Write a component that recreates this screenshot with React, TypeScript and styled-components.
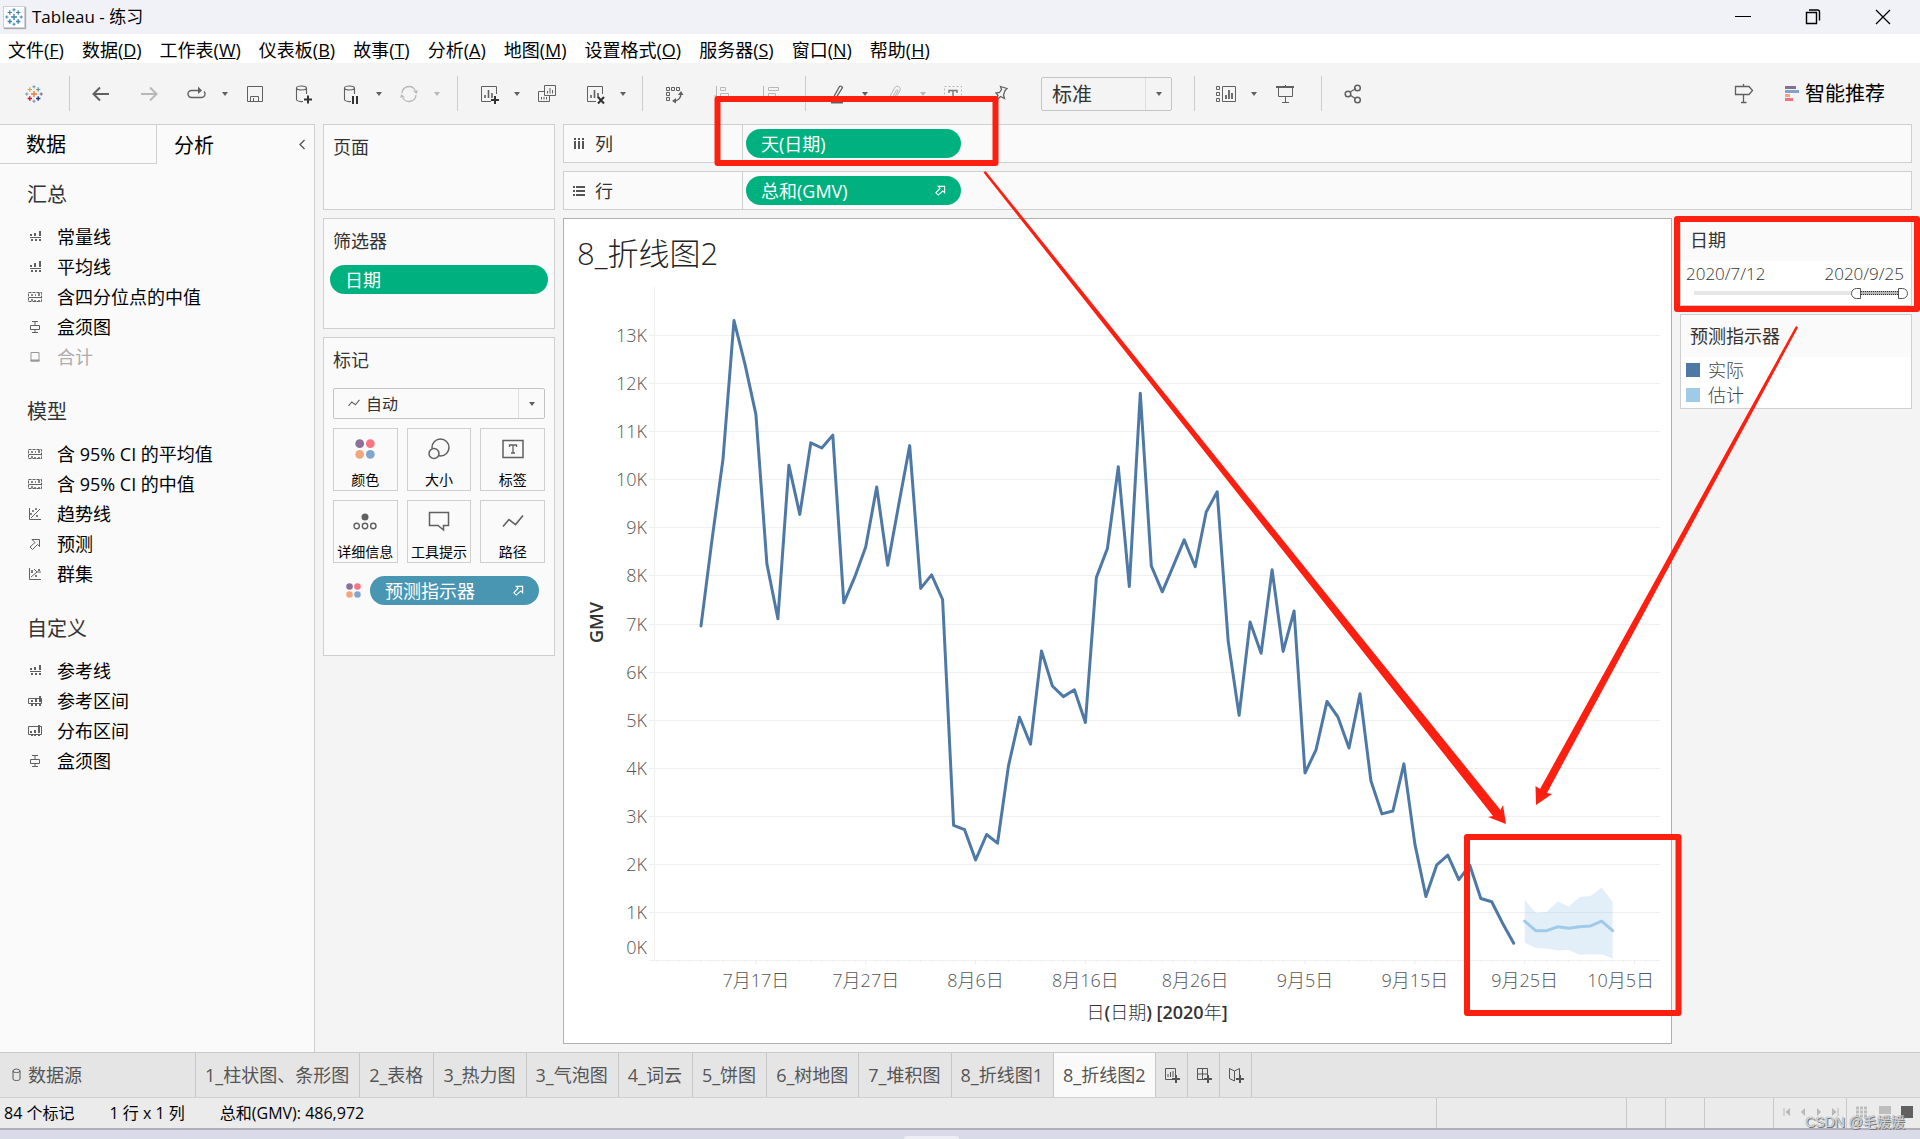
import React, { useLayoutEffect, useRef, useState } from 'react';
import styled, { createGlobalStyle } from 'styled-components';

const uiFont = `"Open Sans", "Noto Sans CJK SC", sans-serif`;

const GlobalStyle = createGlobalStyle`
  *, *::before, *::after { box-sizing: border-box; }
  body { margin: 0; background: #f4f4f4; font-family: ${uiFont}; font-size: 18px; color: #000; }
  button, select, input { font: inherit; color: inherit; margin: 0; }
  button { border: 0; background: none; padding: 0; cursor: pointer; }
  svg { display: block; flex: none; }
  h1, h2, p, ul { margin: 0; padding: 0; font-weight: 400; }
  ul { list-style: none; }
`;

const Window = styled.div`
  position: relative;
  display: flex;
  flex-direction: column;
  min-height: 100vh;
  overflow: hidden;
  line-height: 24px;
`;

/* ---------- title bar and menu ---------- */
const TitleBar = styled.header`
  display: flex;
  align-items: center;
  height: 34px;
  padding: 0 2px 0 3px;
  background: #f1f2f8;
  font-size: 17px;
`;
const AppIcon = styled.span`
  display: flex;
  align-items: center;
  justify-content: center;
  width: 22px;
  height: 22px;
  margin-right: 7px;
  background: #fff;
  border: 1px solid #d0d0d4;
  box-shadow: 1px 1px 1px #aaa;
`;
const WindowButtons = styled.div`
  display: flex;
  margin-left: auto;
`;
const WindowButton = styled.button`
  display: flex;
  align-items: center;
  justify-content: center;
  width: 70px;
  height: 34px;
`;
const MenuBar = styled.nav`
  display: flex;
  gap: 18px;
  height: 29px;
  padding: 4px 8px 0;
  background: #fff;
  line-height: 24px;
`;
const MenuItem = styled.button`
  white-space: nowrap;
  height: 24px;
`;

/* ---------- toolbar ---------- */
const Toolbar = styled.div`
  display: flex;
  align-items: center;
  height: 61px;
  padding-left: 16px;
  background: #f4f4f4;
`;
const ToolGroup = styled.div<{ $width?: number }>`
  display: flex;
  align-items: center;
  width: ${p => (p.$width ? `${p.$width}px` : 'auto')};
  height: 35px;
  padding-left: 15px;
  border-left: 1px solid #cdcdcd;
`;
const Tool = styled.button<{ $off?: boolean }>`
  display: flex;
  align-items: center;
  justify-content: center;
  flex: none;
  width: 32px;
  height: 32px;
  margin-right: 16px;
  color: ${p => (p.$off ? '#b8b8b8' : '#606060')};
`;
const LogoTool = styled(Tool)`
  width: 36px;
  margin-right: 17px;
`;
const Split = styled.div`
  display: flex;
  flex: none;
  gap: 6px;
  margin-right: 8px;
  & > button { margin-right: 0; }
`;
const CaretButton = styled.button<{ $off?: boolean }>`
  display: flex;
  align-items: center;
  justify-content: center;
  width: 12px;
  height: 32px;
  color: ${p => (p.$off ? '#b8b8b8' : '#606060')};
`;
const SelectBox = styled.label<{ $wide?: boolean }>`
  position: relative;
  display: flex;
  align-items: center;
  width: ${p => (p.$wide ? 'auto' : '131px')};
  height: ${p => (p.$wide ? '31px' : '34px')};
  margin: ${p => (p.$wide ? '6px 9px 0' : '0 0 0 8px')};
  border: 1px solid #c4c4c4;
  border-radius: 2px;
  background: ${p => (p.$wide ? '#fafafa' : '#f4f4f4')};
  color: #606060;
`;
const Select = styled.select<{ $wide?: boolean }>`
  appearance: none;
  flex: 1;
  align-self: stretch;
  padding: ${p => (p.$wide ? '0 0 0 32px' : '2px 0 0 10px')};
  border: 0;
  background: transparent;
  font-size: ${p => (p.$wide ? '16px' : '20px')};
  color: #333;
`;
const SelectCaret = styled.span`
  display: flex;
  align-items: center;
  justify-content: center;
  align-self: stretch;
  width: 26px;
  border-left: 1px solid #dedede;
  pointer-events: none;
`;
const SelectGlyph = styled.span`
  position: absolute;
  left: 14px;
  top: 10px;
`;
const ToolbarRight = styled.div`
  display: flex;
  align-items: center;
  margin-left: auto;
  padding-right: 35px;
`;
const ShowMe = styled.button`
  display: flex;
  align-items: center;
  gap: 6px;
  margin-left: 8px;
  font-size: 20px;
  white-space: nowrap;
`;

/* ---------- workspace ---------- */
const Workspace = styled.main`
  display: flex;
  flex: 1;
  background: #f4f4f4;
`;
const SidePane = styled.aside`
  flex: none;
  width: 315px;
  background: #fafafa;
  border-top: 1px solid #cfcfcf;
  border-right: 1px solid #cfcfcf;
`;
const PaneTabs = styled.div`
  display: flex;
  align-items: stretch;
  height: 39px;
  font-size: 20px;
`;
const PaneTab = styled.button<{ $active?: boolean }>`
  width: ${p => (p.$active ? 'auto' : '157px')};
  padding: 2px 0 0 ${p => (p.$active ? '17px' : '26px')};
  text-align: left;
  border: solid #cfcfcf;
  border-width: ${p => (p.$active ? '0' : '0 1px 1px 0')};
`;
const Collapse = styled.button`
  display: flex;
  align-items: center;
  justify-content: flex-end;
  flex: 1;
  padding-right: 8px;
`;
const PaneSections = styled.div`
  display: flex;
  flex-direction: column;
  gap: 12px;
  padding-top: 3px;
`;
const SectionTitle = styled.h2`
  padding-left: 27px;
  font-size: 20px;
  line-height: 55px;
  color: #333;
`;
const SectionItem = styled.button<{ $off?: boolean }>`
  display: flex;
  align-items: center;
  gap: 14px;
  height: 30px;
  padding-left: 27px;
  color: ${p => (p.$off ? '#adadad' : '#000')};
`;

const CardColumn = styled.div`
  display: flex;
  flex-direction: column;
  flex: none;
  gap: 8px;
  width: 232px;
  margin-left: 8px;
`;
const Card = styled.section<{ $min?: number }>`
  min-height: ${p => p.$min || 0}px;
  background: #fafafa;
  border: 1px solid #cfcfcf;
`;
const CardTitle = styled.h2`
  padding-left: 9px;
  font-size: 18px;
  line-height: 44px;
  color: #333;
`;
const Pill = styled.button<{ $color?: string }>`
  display: flex;
  align-items: center;
  justify-content: space-between;
  height: 29px;
  padding: 0 15px;
  border-radius: 15px;
  background: ${p => p.$color || '#00b180'};
  color: #fff;
  text-align: left;
  flex: 1;
  min-width: 0;
  max-width: 218px;
`;
const ShelfPill = styled(Pill)`
  max-width: 215px;
`;
const PillRow = styled.div`
  display: flex;
  align-items: center;
  gap: 9px;
  padding: 2px 6px;
`;
const MarksGrid = styled.div`
  display: grid;
  grid-template-columns: repeat(3, 1fr);
  gap: 9px;
  padding: 9px 9px 11px;
`;
const MarkButton = styled.button`
  display: flex;
  flex-direction: column;
  align-items: center;
  justify-content: space-between;
  height: 63px;
  padding: 7px 0 0;
  border: 1px solid #cfcfcf;
  font-size: 14px;
  line-height: 20px;
  white-space: nowrap;
`;
const MarkGlyph = styled.span`
  display: flex;
  height: 26px;
  align-items: center;
`;
const EncodingRow = styled(PillRow)`
  padding: 2px 15px 2px 22px;
`;

const Canvas = styled.div`
  display: flex;
  flex: 1;
  flex-direction: column;
  gap: 8px;
  min-width: 0;
  margin: 0 8px;
`;
const Shelf = styled.section`
  display: flex;
  height: 39px;
  background: #fafafa;
  border: 1px solid #cfcfcf;
`;
const ShelfLabel = styled.h2`
  display: flex;
  align-items: center;
  gap: 10px;
  width: 179px;
  padding-left: 9px;
  font-size: 18px;
  color: #333;
  border-right: 1px solid #cfcfcf;
`;
const ShelfPills = styled.div`
  display: flex;
  align-items: center;
  flex: 1;
  padding-left: 3px;
`;
const ViewRow = styled.div`
  display: flex;
  flex: 1;
  gap: 8px;
  min-height: 600px;
  margin-bottom: 8px;
`;
const ChartCard = styled.section`
  display: flex;
  flex: 1;
  flex-direction: column;
  min-width: 0;
  background: #fff;
  border: 1px solid #b0b0b0;
`;
const ChartTitle = styled.h1`
  padding-left: 13px;
  font-size: 31px;
  font-weight: 300;
  line-height: 68px;
  color: #222;
`;
const PlotArea = styled.div`
  flex: 1 1 0;
  min-height: 0;
  overflow: hidden;
`;
const AxisText = styled.text`
  font-size: 18px;
  font-weight: 300;
  fill: #555;
  dominant-baseline: central;
`;
const AxisTitle = styled.text`
  font-size: 18px;
  font-weight: 600;
  fill: #333;
  text-anchor: middle;
  dominant-baseline: central;
`;
const Light = styled.tspan`
  font-weight: 300;
`;

const LegendColumn = styled.div`
  display: flex;
  flex-direction: column;
  flex: none;
  gap: 8px;
  width: 232px;
`;
const SideCard = styled(Card)`
  background: #fff;
`;
const SideTitle = styled(CardTitle)`
  background: #fafafa;
  line-height: 42px;
`;
const DateRow = styled.div`
  display: flex;
  justify-content: space-between;
  padding: 0 7px 0 5px;
  font-size: 17px;
  font-weight: 300;
  line-height: 25px;
  color: #333;
`;
const RangeBox = styled.div`
  position: relative;
  height: 18px;
  margin: 0 3px 0 13px;
`;
const RangeTrack = styled.div`
  position: absolute;
  inset: 5px 4px 9px 0;
  background: #e6e6e6;
`;
const RangeFill = styled.div`
  position: absolute;
  inset: 0 4px 0 75%;
  border: dotted #333;
  border-width: 1px 0;
  background: #b5b5b5;
`;
const RangeInput = styled.input<{ $end?: boolean }>`
  position: absolute;
  left: 0;
  top: 0;
  width: 100%;
  height: 14px;
  appearance: none;
  background: transparent;
  pointer-events: none;
  &::-webkit-slider-thumb {
    appearance: none;
    width: 10px;
    height: 11px;
    border: 1px solid #555;
    border-radius: ${p => (p.$end ? '0 6px 6px 0' : '6px 0 0 6px')};
    background: #fff;
    pointer-events: auto;
  }
`;
const LegendList = styled.ul`
  padding: 0 5px;
  font-weight: 300;
  color: #444;
`;
const LegendItem = styled.li`
  display: flex;
  align-items: center;
  gap: 8px;
  height: 25px;
`;
const Swatch = styled.span<{ $color: string }>`
  width: 14px;
  height: 14px;
  background: ${p => p.$color};
`;

/* ---------- bottom bars ---------- */
const SheetBar = styled.nav`
  display: flex;
  height: 45px;
  background: #e5e5e5;
  border-top: 1px solid #cacaca;
  color: #555;
`;
const SheetTab = styled.button<{ $active?: boolean; $source?: boolean }>`
  display: flex;
  align-items: center;
  gap: 7px;
  width: ${p => (p.$source ? '196px' : 'auto')};
  padding: 0 10px 0 ${p => (p.$source ? '12px' : '9px')};
  border-right: 1px solid #c6c6c6;
  background: ${p => (p.$active ? '#fafafa' : 'transparent')};
  white-space: nowrap;
`;
const NewTab = styled.button`
  display: flex;
  align-items: center;
  justify-content: center;
  width: 32px;
  border-right: 1px solid #c6c6c6;
`;
const StatusBar = styled.footer`
  display: flex;
  align-items: center;
  gap: 35px;
  height: 33px;
  padding-left: 4px;
  background: #ebebeb;
  border-top: 1px solid #d0d0d0;
  border-bottom: 2px solid #afb0ba;
  font-size: 16px;
  white-space: nowrap;
`;
const StatusCells = styled.div`
  display: flex;
  align-self: stretch;
  margin-left: auto;
`;
const StatusCell = styled.div<{ $width: number }>`
  display: flex;
  align-items: center;
  justify-content: space-between;
  width: ${p => p.$width}px;
  padding: 0 7px 2px 9px;
  border-left: 1px solid #c9c9c9;
`;
const DesktopStrip = styled.div`
  display: flex;
  justify-content: center;
  align-items: flex-end;
  height: 9px;
  padding-right: 58px;
  background: #d9dbe9;
`;
const DesktopTab = styled.span`
  width: 55px;
  height: 3px;
  border-radius: 3px 3px 0 0;
  background: #eeeff6;
`;
const Watermark = styled.p`
  position: absolute;
  right: 15px;
  bottom: 7px;
  font-family: "Liberation Sans", "Noto Sans CJK SC", sans-serif;
  font-size: 14px;
  line-height: 20px;
  color: #d4d4d4;
  text-shadow: 1px 1px 0 #777, 0 0 1px #888;
`;
const Markup = styled.svg`
  position: absolute;
  left: 0;
  top: 0;
  width: 100%;
  height: 100%;
  pointer-events: none;
`;

/* ---------- icons ---------- */
type IconProps = { w?: number; h?: number; children: React.ReactNode };
const Icon = ({ w = 22, h = 22, children }: IconProps) => (
  <svg width={w} height={h} viewBox={`0 0 ${w} ${h}`} fill="none" stroke="currentColor" strokeWidth="1" aria-hidden="true">
    {children}
  </svg>
);
const Plus = ({ x, y, s = 3, c, t = 1 }: { x: number; y: number; s?: number; c: string; t?: number }) => (
  <path d={`M${x - s} ${y}H${x + s}M${x} ${y - s}V${y + s}`} stroke={c} strokeWidth={t} />
);
const Logo = ({ size, mono }: { size: number; mono?: boolean }) => {
  const c = (v: string) => (mono ? '#3a87b7' : v);
  return (
    <svg width={size} height={size} viewBox="0 0 18 18" aria-hidden="true">
      <Plus x={9} y={9} s={3} t={1.4} c={c('#eb7a33')} />
      <Plus x={4.8} y={4.5} s={2.2} t={1.2} c={c('#e8a23a')} />
      <Plus x={13.2} y={4.5} s={2.2} t={1.2} c={c('#5a9a9a')} />
      <Plus x={4.8} y={13.5} s={2.2} t={1.4} c={c('#c72035')} />
      <Plus x={13.2} y={13.5} s={2.2} t={1.4} c={c('#1f457e')} />
      <Plus x={9} y={1.8} s={1.6} c={c('#7199a6')} />
      <Plus x={9} y={16.2} s={1.6} c={c('#7b8fb0')} />
      <Plus x={1.8} y={9} s={1.6} c={c('#7199a6')} />
      <Plus x={16.2} y={9} s={1.6} c={c('#5b6591')} />
    </svg>
  );
};
const CaretGlyph = () => (
  <svg width="8" height="4" viewBox="0 0 8 4" aria-hidden="true"><path d="M1 0H7L4 4Z" fill="currentColor" /></svg>
);
const Back = () => <Icon><path d="M19 11H3.5M10 4.5L3.5 11L10 17.5" strokeWidth="2" /></Icon>;
const Forward = () => <Icon><path d="M3 11H18.5M12 4.5L18.5 11L12 17.5" strokeWidth="2" /></Icon>;
const Redo = () => <Icon><path d="M14 7.5H5.5A3.5 3.5 0 0 0 5.5 14.5H16A3.5 3.5 0 0 0 18 8.5" strokeWidth="1.4" /><path d="M12 3.5L16 7.5L12 11Z" fill="currentColor" stroke="none" /></Icon>;
const Save = () => <Icon><path d="M3.5 3.5H18.5V18.5H3.5ZM6.5 18.5V13.5H14.5V18.5M9.5 15V18.5" /></Icon>;
const Cylinder = () => <path d="M4.500 5V17C5.500 18.300 8 18.800 11 18.500M14.500 5V11M4.500 5C4.500 2.400 14.500 2.400 14.500 5C14.500 7.600 4.500 7.600 4.500 5Z" strokeWidth="1.1" />;
const AddData = () => <Icon><Cylinder /><path d="M12 16.5H20M16 12.5V20.5" stroke="#333" strokeWidth="2" /></Icon>;
const PauseData = () => <Icon><Cylinder /><path d="M13 13V21M17 13V21" stroke="#333" strokeWidth="2" /></Icon>;
const Refresh = () => <Icon><path d="M4 10A7 7 0 0 1 17 7M18 12A7 7 0 0 1 5 15" strokeWidth="1.3" /><path d="M15 7.5H20L18.5 11ZM7 14.5H2L3.5 11Z" fill="currentColor" stroke="none" /></Icon>;
const Bars = () => <path d="M7 15V12M10.5 15V7M14 15V10" strokeWidth="1.6" />;
const NewSheet = () => <Icon><path d="M13 18.5H3.5V3.5H18.5V11" /><Bars /><path d="M13 17H21M17 13V21" stroke="#333" strokeWidth="2" /></Icon>;
const Duplicate = () => <Icon><path d="M8.5 2.5H19.5V12.5H8.5ZM8 8.5H2.5V18.5H13.5V13" /><path d="M11.5 10.5V8M14 10.5V5M16.5 10.5V7M5.5 16.5V14M8 16.5V14M10.5 16.5V14" /></Icon>;
const ClearSheet = () => <Icon><path d="M12 18.5H3.5V3.5H18.5V11" /><Bars /><path d="M14 14L20 20.5M20 14L14 20.5" stroke="#333" strokeWidth="2" /></Icon>;
const Swap = () => <Icon><path d="M3.5 4.5H6.5V7.5H3.5ZM8.5 4.5H11.5V7.5H8.5ZM13.5 4.5H16.5V7.5H13.5ZM3.5 9.5H6.5V12.5H3.5ZM3.5 14.5H6.5V17.5H3.5Z" /><path d="M18 10C18 15 15 18 11 18" strokeWidth="1.4" /><path d="M15 12L18 8L20.5 12ZM13 15L9 18L13 20.5Z" fill="currentColor" stroke="none" /></Icon>;
const SortUp = () => <Icon><path d="M5.5 3V19M3 13H5M9.5 4.5H14.5V7.5H9.5ZM9.5 10.5H17.5V13.5H9.5Z" /></Icon>;
const SortDown = () => <Icon><path d="M4.5 3V19M9.5 4.5H19.5V7.5H9.5ZM9.5 10.5H16.5V13.5H9.5Z" /></Icon>;
const Pen = () => <Icon><path d="M13.5 3.5L8.5 12.5L8 16L10.5 14L16.5 4.5Q15 2.5 13.5 3.5Z" strokeWidth="1.3" /><path d="M5 19.5H17" strokeWidth="2" /></Icon>;
const Clip = () => <Icon><path d="M5 15L10.5 5A3 3 0 0 1 16 7.5L11 16M7.500 16L12.500 7A1 1 0 0 1 14 8L10 15" /></Icon>;
const TextLabel = () => <Icon><path d="M2.5 3.5H19.5V18.5H2.5Z" strokeDasharray="2 2" /><path d="M7 10V7.5H15V10M11 7.5V16M9 16H13" stroke="#777" strokeWidth="1.4" /></Icon>;
const Pin = () => <Icon><path d="M10.5 3.5L17 5.5L15 7.5L13.5 12L14.5 15.5L10.5 13.5L4.5 19L8 12.5L6 10L9.5 9.5L11.5 6.5Z" strokeWidth="1.3" /></Icon>;
const Guide = () => <Icon><path d="M1.5 3.5H4.5V6.5H1.5ZM1.5 9.5H4.5V12.5H1.5ZM1.5 15.5H4.5V18.5H1.5ZM7.5 3.5H20.5V18.5H7.5Z" /><path d="M11 16V12M14 16V7M17 16V10" strokeWidth="1.8" /></Icon>;
const Present = () => <Icon><path d="M3 4H21" strokeWidth="2" /><path d="M5.5 5V13.5H19.5V5M12.5 2V4M12.5 14V19M9 19.5H16" /></Icon>;
const Share = () => <Icon><path d="M8 9L14 5.5M8 12L14 16" strokeWidth="1.3" /><circle cx="6" cy="11" r="2.8" strokeWidth="1.5" /><circle cx="15.5" cy="5" r="2.8" strokeWidth="1.5" /><circle cx="15.5" cy="17" r="2.8" strokeWidth="1.5" /></Icon>;
const Sign = () => <Icon><path d="M10.5 1V3M10.5 12V19M8 19.5H13.5M2.5 3.5H16L19.5 7.500L16 11.500H2.500Z" strokeWidth="1.3" /></Icon>;
const ShowMeGlyph = () => (
  <svg width="15" height="18" viewBox="0 0 15 18" aria-hidden="true">
    <path d="M1 1H12V4H1Z" fill="#857095" /><path d="M1 5H15V8H1Z" fill="#7fa3cc" /><path d="M1 9H6V12H1Z" fill="#f0a57c" /><path d="M1 13H9V16H1Z" fill="#f76e80" />
  </svg>
);
const Arrow = ({ size = 12 }: { size?: number }) => (
  <svg width={size} height={size} viewBox="0 0 12 12" fill="none" stroke="currentColor" strokeWidth="1.2" aria-hidden="true">
    <path d="M3.5 1.5H10.5V8.5L8.5 6.5L3.5 11L1 8.5L5.5 3.5Z" />
  </svg>
);
const Dots = ({ size = 20 }: { size?: number }) => (
  <svg width={size} height={size} viewBox="0 0 20 20" aria-hidden="true">
    <circle cx="4.7" cy="4.7" r="4.4" fill="#8a7299" /><circle cx="15.3" cy="4.7" r="4.4" fill="#f77482" />
    <circle cx="4.7" cy="15.3" r="4.4" fill="#f2a67d" /><circle cx="15.3" cy="15.3" r="4.4" fill="#80a6cf" />
  </svg>
);
const ZigZag = ({ w = 22, t = 1.6 }: { w?: number; t?: number }) => (
  <svg width={w} height={w * 0.64} viewBox="0 0 22 14" fill="none" stroke="#606060" strokeWidth={t} aria-hidden="true">
    <path d="M1 12.5L7 5.5L13.5 10.5L21 1.5" />
  </svg>
);

const sideGlyphs: Record<string, React.ReactNode> = {
  line: <><path d="M3 8.5H14" /><path d="M4 5V7M8 4V7M13 2V7M5 10V12M9 10V12M13 10V12" strokeWidth="2" /></>,
  avg: <><path d="M3 9.5H14" /><path d="M4 6V8M8 4V8M13 2V8M5 11V13M9 11V13M13 11V13" strokeWidth="2" /></>,
  quart: <><path d="M1.5 3.5H14.5V12.5H1.5Z" strokeDasharray="3 1" /><path d="M2 8.5H14" /><path d="M4 6H6M8 6H9M12 4V7M4 11H6M8 11V13M12 11V13" strokeWidth="1.5" /></>,
  box: <path d="M3.5 6.5H12.5V10.5H3.5ZM8 6V3M8 11V13M5 2.5H11M5 13.5H11" />,
  total: <><path d="M4 3.5H12V12H4Z" /><path d="M3.5 11.5H12.5" strokeWidth="2" /></>,
  trend: <><path d="M2.5 2V13.5H14M4 12L13 3" /><path d="M6 4V6M4 7V9M10 9V11M9 2V4" strokeWidth="1.5" /></>,
  forecast: <path d="M5 3.5H12.5V10.5L10.5 8.5L5.5 13.5L3 11L8 6.5Z" />,
  cluster: <><path d="M2.5 2V13.5H14M4 11L10 6M7 3L10 6H14" /><path d="M5 4V7M12 3V5M9 9V11" strokeWidth="1.7" /></>,
  band: <><path d="M1.5 5.5H14.5V10.5H1.5Z" /><path d="M5 7V9M9 5V9M13 3V9M5 11V13M9 11V13M13 11V13" strokeWidth="2" /></>,
  dist: <><path d="M1.5 3.5H14.5V11.5H1.5Z" /><path d="M4 8V10M8 7V10M12 2V10M5 12V13M8 12V13M12 12V13" strokeWidth="2" /></>,
};

/* ---------- data ---------- */
const menus: [string, string][] = [['文件', 'F'], ['数据', 'D'], ['工作表', 'W'], ['仪表板', 'B'], ['故事', 'T'], ['分析', 'A'], ['地图', 'M'], ['设置格式', 'O'], ['服务器', 'S'], ['窗口', 'N'], ['帮助', 'H']];
const sections: { title: string; items: [string, string][] }[] = [
  { title: '汇总', items: [['line', '常量线'], ['avg', '平均线'], ['quart', '含四分位点的中值'], ['box', '盒须图'], ['total', '合计']] },
  { title: '模型', items: [['quart', '含 95% CI 的平均值'], ['quart', '含 95% CI 的中值'], ['trend', '趋势线'], ['forecast', '预测'], ['cluster', '群集']] },
  { title: '自定义', items: [['line', '参考线'], ['band', '参考区间'], ['dist', '分布区间'], ['box', '盒须图']] },
];
const sheets = ['1_柱状图、条形图', '2_表格', '3_热力图', '3_气泡图', '4_词云', '5_饼图', '6_树地图', '7_堆积图', '8_折线图1', '8_折线图2'];
const actual = [6.95, 8.74, 10.42, 13.3, 12.4, 11.35, 8.24, 7.1, 10.29, 9.27, 10.76, 10.65, 10.92, 7.43, 7.97, 8.59, 9.84, 8.21, 9.47, 10.7, 7.73, 8.01, 7.5, 2.8, 2.71, 2.08, 2.61, 2.43, 4.04, 5.05, 4.49, 6.43, 5.7, 5.48, 5.62, 4.94, 7.96, 8.56, 10.26, 7.77, 11.79, 8.2, 7.66, 8.2, 8.74, 8.18, 9.32, 9.74, 6.63, 5.09, 7.03, 6.38, 8.12, 6.42, 7.26, 3.89, 4.37, 5.38, 5.05, 4.41, 5.54, 3.73, 3.04, 3.1, 4.08, 2.41, 1.32, 1.98, 2.18, 1.67, 1.97, 1.28, 1.21, 0.76, 0.35];
const estimate = [0.81, 0.61, 0.61, 0.69, 0.66, 0.69, 0.71, 0.81, 0.61];
const upper = [1.25, 0.98, 1.0, 1.22, 1.11, 1.31, 1.33, 1.51, 1.21];
const lower = [0.36, 0.25, 0.24, 0.2, 0.21, 0.11, 0.12, 0.12, 0.03];
const dateTicks = ['7月17日', '7月27日', '8月6日', '8月16日', '8月26日', '9月5日', '9月15日', '9月25日', '10月5日'];

const LineChart = () => {
  const ref = useRef<HTMLDivElement>(null);
  const [size, setSize] = useState({ w: 1107, h: 756 });
  useLayoutEffect(() => {
    const el = ref.current;
    if (!el) return;
    const measure = () => setSize({ w: el.clientWidth, h: el.clientHeight });
    measure();
    const observer = new ResizeObserver(measure);
    observer.observe(el);
    return () => observer.disconnect();
  }, []);
  const left = 90;
  const right = size.w - 11;
  const bottom = size.h - 83;
  const x = (day: number) => left + ((day + 4.28) / 91.6) * (right - left);
  const y = (v: number) => bottom - (v / 14) * bottom;
  const pts = (values: number[], start: number) => values.map((v, i) => `${x(start + i).toFixed(1)},${y(v).toFixed(1)}`);
  const band = [...pts(upper, 75), ...pts(lower, 75).reverse()].join(' ');
  return (
    <PlotArea ref={ref}>
      <svg width={size.w} height={size.h} role="img" aria-label="GMV">
        {Array.from({ length: 14 }, (_, k) => (
          <g key={k}>
            <path d={`M${left - 5} ${Math.round(y(k)) + 0.5}H${right}`} stroke="#f0f0f0" />
            <AxisText x={left - 7} y={k === 0 ? y(0) - 13 : y(k)} textAnchor="end">{`${k}K`}</AxisText>
          </g>
        ))}
        <path d={`M${left + 0.5} 0V${bottom}`} stroke="#f0f0f0" />
        {Array.from({ length: 91 }, (_, i) => (
          <path key={i} d={`M${x(i - 4)} ${bottom}v${(i + 1) % 10 === 0 ? 4 : 2}`} stroke="#ececec" />
        ))}
        {dateTicks.map((label, i) => (
          <AxisText key={label} x={i === 8 ? right - 6 : x(5 + i * 10)} y={bottom + 20} textAnchor={i === 8 ? 'end' : 'middle'}>{label}</AxisText>
        ))}
        <polygon points={band} fill="#a0cbe8" fillOpacity="0.3" />
        <polyline points={pts(estimate, 75).join(' ')} fill="none" stroke="#a0cbe8" strokeWidth="3" strokeLinecap="round" strokeLinejoin="round" />
        <polyline points={pts(actual, 0).join(' ')} fill="none" stroke="#4e79a7" strokeWidth="3" strokeLinecap="round" strokeLinejoin="round" />
        <AxisTitle transform={`translate(32 ${bottom / 2 - 1}) rotate(-90)`}>GMV</AxisTitle>
        <AxisTitle x={(left + right) / 2} y={bottom + 52}>
          <Light>日</Light>(<Light>日期</Light>) [2020<Light>年</Light>]
        </AxisTitle>
      </svg>
    </PlotArea>
  );
};

const SplitTool = ({ name, off, children }: { name: string; off?: boolean; children: React.ReactNode }) => (
  <Split>
    <Tool aria-label={name} $off={off}>{children}</Tool>
    <CaretButton aria-label={`${name} 选项`} $off={off}><CaretGlyph /></CaretButton>
  </Split>
);

export default function App() {
  return (
    <Window>
      <GlobalStyle />
      <TitleBar>
        <AppIcon><Logo size={18} mono /></AppIcon>
        Tableau - 练习
        <WindowButtons>
          <WindowButton aria-label="最小化"><Icon w={16} h={16}><path d="M0 7.5H16" stroke="#000" /></Icon></WindowButton>
          <WindowButton aria-label="还原"><Icon w={16} h={16}><path d="M1.5 3.5H11.5V14.5H1.5ZM4 1H12.5Q14.5 1 14.5 3V11.500" stroke="#000" strokeWidth="1.4" /></Icon></WindowButton>
          <WindowButton aria-label="关闭"><Icon w={16} h={16}><path d="M1 1L15 15M15 1L1 15" stroke="#000" strokeWidth="1.3" /></Icon></WindowButton>
        </WindowButtons>
      </TitleBar>
      <MenuBar>
        {menus.map(([name, key]) => <MenuItem key={key}>{name}(<u>{key}</u>)</MenuItem>)}
      </MenuBar>
      <Toolbar>
        <LogoTool aria-label="Tableau"><Logo size={18} /></LogoTool>
        <ToolGroup $width={388}>
          <Tool aria-label="撤消"><Back /></Tool>
          <Tool aria-label="重做" $off><Forward /></Tool>
          <SplitTool name="重播"><Redo /></SplitTool>
          <Tool aria-label="保存"><Save /></Tool>
          <Tool aria-label="新建数据源"><AddData /></Tool>
          <SplitTool name="暂停更新"><PauseData /></SplitTool>
          <SplitTool name="刷新" off><Refresh /></SplitTool>
        </ToolGroup>
        <ToolGroup $width={185}>
          <SplitTool name="新建工作表"><NewSheet /></SplitTool>
          <Tool aria-label="复制"><Duplicate /></Tool>
          <SplitTool name="清除工作表"><ClearSheet /></SplitTool>
        </ToolGroup>
        <ToolGroup $width={163}>
          <Tool aria-label="交换行和列"><Swap /></Tool>
          <Tool aria-label="升序" $off><SortUp /></Tool>
          <Tool aria-label="降序" $off><SortDown /></Tool>
        </ToolGroup>
        <ToolGroup $width={389}>
          <SplitTool name="突出显示"><Pen /></SplitTool>
          <SplitTool name="组" off><Clip /></SplitTool>
          <Tool aria-label="标签" $off><TextLabel /></Tool>
          <Tool aria-label="固定"><Pin /></Tool>
          <SelectBox>
            <Select aria-label="适合" defaultValue="标准"><option>标准</option></Select>
            <SelectCaret><CaretGlyph /></SelectCaret>
          </SelectBox>
        </ToolGroup>
        <ToolGroup $width={127}>
          <SplitTool name="显示卡"><Guide /></SplitTool>
          <Tool aria-label="演示模式"><Present /></Tool>
        </ToolGroup>
        <ToolGroup>
          <Tool aria-label="共享"><Share /></Tool>
        </ToolGroup>
        <ToolbarRight>
          <Tool aria-label="指南"><Sign /></Tool>
          <ShowMe><ShowMeGlyph />智能推荐</ShowMe>
        </ToolbarRight>
      </Toolbar>

      <Workspace>
        <SidePane>
          <PaneTabs>
            <PaneTab>数据</PaneTab>
            <PaneTab $active>分析</PaneTab>
            <Collapse aria-label="折叠"><Icon w={8} h={12}><path d="M6.5 1L2 5.5L6.5 10" stroke="#555" strokeWidth="1.3" /></Icon></Collapse>
          </PaneTabs>
          <PaneSections>
            {sections.map(s => (
              <section key={s.title}>
                <SectionTitle>{s.title}</SectionTitle>
                {s.items.map(([glyph, text]) => (
                  <SectionItem key={text} $off={text === '合计'}>
                    <svg width="16" height="16" viewBox="0 0 16 16" fill="none" stroke={text === '合计' ? '#999' : '#606060'} aria-hidden="true">{sideGlyphs[glyph]}</svg>
                    {text}
                  </SectionItem>
                ))}
              </section>
            ))}
          </PaneSections>
        </SidePane>

        <CardColumn>
          <Card $min={86}><CardTitle>页面</CardTitle></Card>
          <Card $min={111}>
            <CardTitle>筛选器</CardTitle>
            <PillRow><Pill>日期</Pill></PillRow>
          </Card>
          <Card $min={319}>
            <CardTitle>标记</CardTitle>
            <SelectBox $wide>
              <SelectGlyph><ZigZag w={12} t={2} /></SelectGlyph>
              <Select $wide aria-label="标记类型" defaultValue="自动"><option>自动</option></Select>
              <SelectCaret><CaretGlyph /></SelectCaret>
            </SelectBox>
            <MarksGrid>
              <MarkButton><MarkGlyph><Dots /></MarkGlyph>颜色</MarkButton>
              <MarkButton><MarkGlyph><Icon w={24}><circle cx="13.5" cy="9.5" r="8.5" stroke="#606060" strokeWidth="1.5" /><circle cx="7" cy="15.5" r="5" fill="#fafafa" stroke="#606060" strokeWidth="1.5" /></Icon></MarkGlyph>大小</MarkButton>
              <MarkButton><MarkGlyph><Icon><path d="M1 2.5H21V19.5H1Z" stroke="#606060" strokeWidth="1.5" /><path d="M7.5 9V7H14.5V9M11 7V15M9 15H13" stroke="#606060" strokeWidth="1.3" /></Icon></MarkGlyph>标签</MarkButton>
              <MarkButton><MarkGlyph><Icon w={24}><circle cx="12" cy="7" r="3.5" fill="#606060" stroke="none" /><g stroke="#606060" strokeWidth="1.4"><circle cx="3.7" cy="16" r="2.7" /><circle cx="12" cy="16" r="2.7" /><circle cx="20.3" cy="16" r="2.7" /></g></Icon></MarkGlyph>详细信息</MarkButton>
              <MarkButton><MarkGlyph><Icon><path d="M1.5 2.5H20.5V15.5H15.5V20L10 15.5H1.5Z" stroke="#606060" strokeWidth="1.5" /></Icon></MarkGlyph>工具提示</MarkButton>
              <MarkButton><MarkGlyph><ZigZag /></MarkGlyph>路径</MarkButton>
            </MarksGrid>
            <EncodingRow><Dots size={15} /><Pill $color="#4996b2">预测指示器<Arrow size={11} /></Pill></EncodingRow>
          </Card>
        </CardColumn>

        <Canvas>
          <Shelf>
            <ShelfLabel>
              <Icon w={12} h={14}><path d="M2 4V12M6 4V12M10 4V12M2 1V3M6 1V3M10 1V3" strokeWidth="2" stroke="#555" /></Icon>列
            </ShelfLabel>
            <ShelfPills><ShelfPill>天(日期)</ShelfPill></ShelfPills>
          </Shelf>
          <Shelf>
            <ShelfLabel>
              <Icon w={12} h={14}><path d="M3 3H12M3 7H12M3 11H12M0 3H2M0 7H2M0 11H2" strokeWidth="2" stroke="#555" /></Icon>行
            </ShelfLabel>
            <ShelfPills><ShelfPill>总和(GMV)<Arrow size={11} /></ShelfPill></ShelfPills>
          </Shelf>
          <ViewRow>
            <ChartCard>
              <ChartTitle>8_折线图2</ChartTitle>
              <LineChart />
            </ChartCard>
            <LegendColumn>
              <SideCard $min={88}>
                <SideTitle>日期</SideTitle>
                <DateRow><span>2020/7/12</span><span>2020/9/25</span></DateRow>
                <RangeBox>
                  <RangeTrack><RangeFill /></RangeTrack>
                  <RangeInput type="range" aria-label="开始日期" defaultValue={77} />
                  <RangeInput type="range" aria-label="结束日期" defaultValue={100} $end />
                </RangeBox>
              </SideCard>
              <SideCard $min={95}>
                <SideTitle>预测指示器</SideTitle>
                <LegendList>
                  <LegendItem><Swatch $color="#4e79a7" />实际</LegendItem>
                  <LegendItem><Swatch $color="#a0cbe8" />估计</LegendItem>
                </LegendList>
              </SideCard>
            </LegendColumn>
          </ViewRow>
        </Canvas>
      </Workspace>

      <SheetBar>
        <SheetTab $source><Icon w={9} h={14}><path d="M1 3V11C1 13 8 13 8 11V3C8 0.5 1 0.5 1 3C1 5 8 5 8 3" /></Icon>数据源</SheetTab>
        {sheets.map(s => <SheetTab key={s} $active={s === '8_折线图2'}>{s}</SheetTab>)}
        <NewTab aria-label="新建工作表"><Icon w={16} h={16}><path d="M8 12.5H1.5V1.5H11.5V8M4 10V7M6.5 10V5M9 10V4" /><path d="M8 12H16M12 8V16" strokeWidth="2" /></Icon></NewTab>
        <NewTab aria-label="新建仪表板"><Icon w={16} h={16}><path d="M8 12.5H1.5V1.5H11.5V8M1.5 7H11.5M6.5 1.5V12.5" /><path d="M8 12H16M12 8V16" strokeWidth="2" /></Icon></NewTab>
        <NewTab aria-label="新建故事"><Icon w={16} h={16}><path d="M6.5 14V4L1.5 1.5V11.5L6.5 14M6.5 4L11.5 1.5V8" /><path d="M8 12H16M12 8V16" strokeWidth="2" /></Icon></NewTab>
      </SheetBar>
      <StatusBar>
        <span>84 个标记</span><span>1 行 x 1 列</span><span>总和(GMV): 486,972</span>
        <StatusCells>
          <StatusCell $width={190} /><StatusCell $width={39} /><StatusCell $width={39} /><StatusCell $width={69} />
          <StatusCell $width={73}>
            <Icon w={56} h={10}><path d="M1 1V9M55 1V9" stroke="#b8b8b8" /><path d="M7 1V9L2.5 5ZM22 1V9L18 5ZM34 1V9L38 5ZM49 1V9L53.5 5Z" fill="#b8b8b8" stroke="none" /></Icon>
          </StatusCell>
          <StatusCell $width={74}>
            <Icon w={12} h={12}><path d="M0 2H12M0 6H12M0 10H12" stroke="#bdbdbd" strokeWidth="3" strokeDasharray="3 1" /></Icon>
            <Icon w={12} h={12}><path d="M0 0H12V8H0Z" fill="#bdbdbd" stroke="none" /></Icon>
            <Icon w={12} h={12}><path d="M0 0H12V12H0Z" fill="#606060" stroke="none" /></Icon>
          </StatusCell>
        </StatusCells>
      </StatusBar>
      <DesktopStrip><DesktopTab /></DesktopStrip>

      <Watermark>CSDN @毛媛媛</Watermark>
      <Markup viewBox="0 0 1920 1139" preserveAspectRatio="none" aria-hidden="true">
        <g fill="none" stroke="#fd2011" strokeWidth="6" strokeLinejoin="round">
          <rect x="717.500" y="99" width="278" height="64" />
          <rect x="1677" y="219" width="240" height="90" />
          <rect x="1467" y="837" width="211.500" height="176" />
        </g>
        <g fill="#fd2011">
          <path d="M983.500 172.500L1493 816L1488 817L1506 824L1503 805L1500.500 810L985.500 171Z" />
          <path d="M1796 326L1540 789L1535.500 786L1536 805L1552 794L1547 793L1798 327.500Z" />
        </g>
      </Markup>
    </Window>
  );
}
